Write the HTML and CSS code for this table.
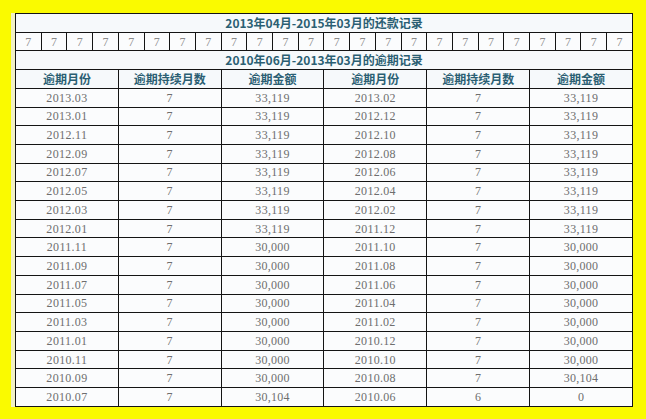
FILE: index.html
```html
<!DOCTYPE html>
<html>
<head>
<meta charset="utf-8">
<link rel="stylesheet" href="styles.css">
</head>
<body>
<div class="frame">
<table class="grid">
<colgroup>
<col><col><col><col><col><col><col><col><col><col><col><col>
<col><col><col><col><col><col><col><col><col><col><col><col>
</colgroup>
<tbody>
<tr><td class="title" colspan="24">2013年04月-2015年03月的还款记录</td></tr>
<tr class="sevens">
<td>7</td><td>7</td><td>7</td><td>7</td><td>7</td><td>7</td><td>7</td><td>7</td><td>7</td><td>7</td><td>7</td><td>7</td>
<td>7</td><td>7</td><td>7</td><td>7</td><td>7</td><td>7</td><td>7</td><td>7</td><td>7</td><td>7</td><td>7</td><td>7</td>
</tr>
<tr><td class="title" colspan="24">2010年06月-2013年03月的逾期记录</td></tr>
<tr class="head">
<td colspan="4">逾期月份</td><td colspan="4">逾期持续月数</td><td colspan="4">逾期金额</td>
<td colspan="4">逾期月份</td><td colspan="4">逾期持续月数</td><td colspan="4">逾期金额</td>
</tr>
<tr class="data"><td colspan="4">2013.03</td><td colspan="4">7</td><td colspan="4">33,119</td><td colspan="4">2013.02</td><td colspan="4">7</td><td colspan="4">33,119</td></tr>
<tr class="data"><td colspan="4">2013.01</td><td colspan="4">7</td><td colspan="4">33,119</td><td colspan="4">2012.12</td><td colspan="4">7</td><td colspan="4">33,119</td></tr>
<tr class="data"><td colspan="4">2012.11</td><td colspan="4">7</td><td colspan="4">33,119</td><td colspan="4">2012.10</td><td colspan="4">7</td><td colspan="4">33,119</td></tr>
<tr class="data"><td colspan="4">2012.09</td><td colspan="4">7</td><td colspan="4">33,119</td><td colspan="4">2012.08</td><td colspan="4">7</td><td colspan="4">33,119</td></tr>
<tr class="data"><td colspan="4">2012.07</td><td colspan="4">7</td><td colspan="4">33,119</td><td colspan="4">2012.06</td><td colspan="4">7</td><td colspan="4">33,119</td></tr>
<tr class="data"><td colspan="4">2012.05</td><td colspan="4">7</td><td colspan="4">33,119</td><td colspan="4">2012.04</td><td colspan="4">7</td><td colspan="4">33,119</td></tr>
<tr class="data"><td colspan="4">2012.03</td><td colspan="4">7</td><td colspan="4">33,119</td><td colspan="4">2012.02</td><td colspan="4">7</td><td colspan="4">33,119</td></tr>
<tr class="data"><td colspan="4">2012.01</td><td colspan="4">7</td><td colspan="4">33,119</td><td colspan="4">2011.12</td><td colspan="4">7</td><td colspan="4">33,119</td></tr>
<tr class="data"><td colspan="4">2011.11</td><td colspan="4">7</td><td colspan="4">30,000</td><td colspan="4">2011.10</td><td colspan="4">7</td><td colspan="4">30,000</td></tr>
<tr class="data"><td colspan="4">2011.09</td><td colspan="4">7</td><td colspan="4">30,000</td><td colspan="4">2011.08</td><td colspan="4">7</td><td colspan="4">30,000</td></tr>
<tr class="data"><td colspan="4">2011.07</td><td colspan="4">7</td><td colspan="4">30,000</td><td colspan="4">2011.06</td><td colspan="4">7</td><td colspan="4">30,000</td></tr>
<tr class="data"><td colspan="4">2011.05</td><td colspan="4">7</td><td colspan="4">30,000</td><td colspan="4">2011.04</td><td colspan="4">7</td><td colspan="4">30,000</td></tr>
<tr class="data"><td colspan="4">2011.03</td><td colspan="4">7</td><td colspan="4">30,000</td><td colspan="4">2011.02</td><td colspan="4">7</td><td colspan="4">30,000</td></tr>
<tr class="data"><td colspan="4">2011.01</td><td colspan="4">7</td><td colspan="4">30,000</td><td colspan="4">2010.12</td><td colspan="4">7</td><td colspan="4">30,000</td></tr>
<tr class="data"><td colspan="4">2010.11</td><td colspan="4">7</td><td colspan="4">30,000</td><td colspan="4">2010.10</td><td colspan="4">7</td><td colspan="4">30,000</td></tr>
<tr class="data"><td colspan="4">2010.09</td><td colspan="4">7</td><td colspan="4">30,000</td><td colspan="4">2010.08</td><td colspan="4">7</td><td colspan="4">30,104</td></tr>
<tr class="data"><td colspan="4">2010.07</td><td colspan="4">7</td><td colspan="4">30,104</td><td colspan="4">2010.06</td><td colspan="4">6</td><td colspan="4">0</td></tr>
</tbody>
</table>
</div>
</body>
</html>
```

FILE: styles.css
```css
html, body {
  margin: 0;
  padding: 0;
}
body {
  background: #fafa00;
  width: 646px;
  height: 419px;
  overflow: hidden;
  padding: 13px 0 0 11px;
  box-sizing: border-box;
}
.frame {
  display: inline-block;
  border-left: 4px solid #f2f2c4;
  vertical-align: top;
}
.grid {
  border-collapse: collapse;
  table-layout: fixed;
  width: 618px;
  height: 394px;
  background: #fbfcfd;
}
.grid td {
  border: 1px solid #141414;
  padding: 0;
  text-align: center;
  vertical-align: middle;
  overflow: hidden;
  white-space: nowrap;
  line-height: 14px;
}
.title, .head td {
  font-family: "Noto Sans CJK SC", "Liberation Sans", sans-serif;
  font-weight: bold;
  font-size: 12px;
  color: #2b5f73;
  background: #f6f9fb;
}
.sevens td {
  font-family: "Liberation Serif", serif;
  font-size: 12px;
  color: #8a8a8a;
}
.data td {
  font-family: "Liberation Serif", serif;
  font-size: 12px;
  color: #6e6e6e;
  letter-spacing: 0.3px;
}
```
